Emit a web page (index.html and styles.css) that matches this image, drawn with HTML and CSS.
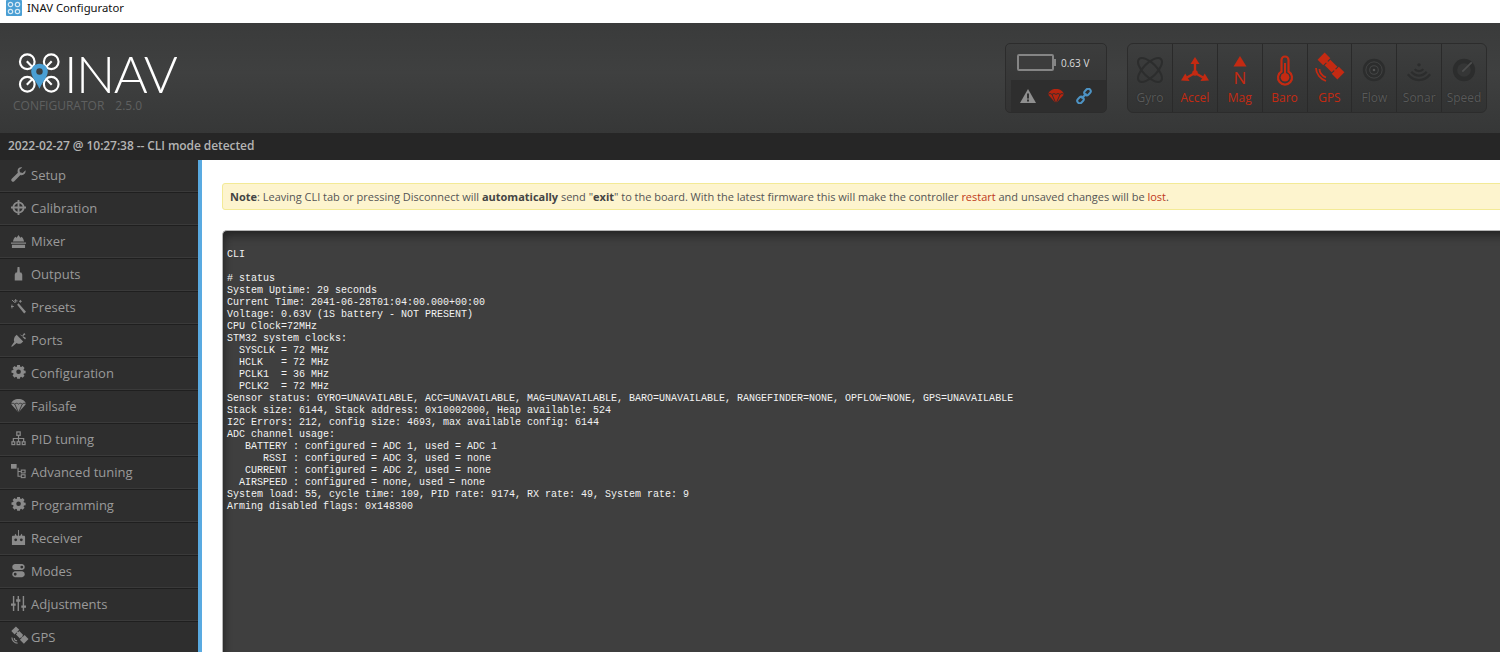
FILE: index.html
```html
<!DOCTYPE html>
<html lang="en">
<head>
<meta charset="utf-8">
<title>INAV Configurator</title>
<link rel="stylesheet" href="styles.css">
</head>
<body>
<svg width="0" height="0" class="defs">
<defs>
<g id="i-gear"><path fill="currentColor" fill-rule="evenodd" d="M6.200 0h3.600l.4 2.200 1.200.5 1.900-1.300 2.500 2.500-1.300 1.900.5 1.200 2.200.4v3.200l-2.200.4-.5 1.200 1.300 1.900-2.500 2.500-1.900-1.300-1.200.5-.4 2.200H6.200l-.4-2.200-1.200-.5-1.900 1.300L.2 13.600l1.300-1.900-.5-1.200-2.200-.4V7l2.200-.4.5-1.200L.2 3.900l2.500-2.500 1.900 1.300 1.200-.5zM8 5.800a3 3 0 1 0 0 6 3 3 0 0 0 0-6z" transform="translate(1.500 0) scale(.82)"/></g>
<g id="i-chute"><path fill="currentColor" d="M8 1C4 1 .8 3 0 6.500L8 15.500l8-9C15.200 3 12 1 8 1z"/><path fill="none" stroke="#2e2e2e" stroke-width=".9" d="M0 6.500c1.300-1.200 2.700-1.200 4 0 1.300-1.200 2.700-1.200 4 0 1.300-1.200 2.700-1.200 4 0 1.300-1.200 2.700-1.200 4 0M4 6.500L8 15.500 12 6.500"/></g>
<g id="i-sat"><g transform="rotate(-45 9.500 6.500)" fill="currentColor"><rect x="6" y="-3" width="7" height="5"/><rect x="7" y="3" width="5" height="6"/><rect x="6" y="10" width="7" height="6"/><rect x="9" y="1" width="1.200" height="10"/></g><path fill="none" stroke="currentColor" stroke-width="1.200" d="M1 9c0 3 2.500 6 6 6M3.500 9.500c0 1.500 1.200 3 3 3"/></g>
</defs>
</svg>
<div class="titlebar">
  <svg class="appicon" viewBox="0 0 16 16"><rect width="16" height="16" rx="1" fill="#4a9fd4"/><g fill="none" stroke="#d8eaf5" stroke-width="1.200"><circle cx="4.500" cy="4.500" r="2.200"/><circle cx="11.500" cy="4.500" r="2.200"/><circle cx="4.500" cy="11.500" r="2.200"/><circle cx="11.500" cy="11.500" r="2.200"/></g></svg>
  <span>INAV Configurator</span>
</div>
<header class="header">
  <div class="brand">
    <div class="logo">
      <svg class="drone" viewBox="0 0 44 42">
        <g fill="none" stroke="#fff" stroke-width="2.200">
          <circle cx="9.500" cy="9.500" r="7.500"/><circle cx="34" cy="9.500" r="7.500"/><circle cx="9.500" cy="32.500" r="7.500"/><circle cx="34" cy="32.500" r="7.500"/>
          <path d="M9 9l6 6M34.500 9l-6 6M9 33l6-6M34.500 33l-6-6"/>
        </g>
        <path fill="#4a9fd4" d="M22 11.500c-5 0-8.500 3.700-8.500 8 0 5 5 10 8.500 17.500 3.500-7.500 8.500-12.500 8.500-17.500 0-4.300-3.500-8-8.500-8z"/>
        <circle cx="22" cy="19.500" r="3.300" fill="#3c3d3d"/>
      </svg>
      <span class="wordmark">INAV</span>
    </div>
    <div class="subtitle"><span>CONFIGURATOR</span><span>2.5.0</span></div>
  </div>
  <div class="status-box">
    <div class="battery-row">
      <span class="battery"></span>
      <span class="volt">0.63 V</span>
    </div>
    <div class="flag-row">
      <svg class="flag" viewBox="0 0 16 16"><path fill="#8f8f8f" d="M8 1l8 14H0z"/><rect x="7" y="5.500" width="2" height="5" fill="#333"/><rect x="7" y="11.500" width="2" height="2" fill="#333"/></svg>
      <svg class="flag red" viewBox="0 0 16 16"><use href="#i-chute"/></svg>
      <svg class="flag" viewBox="0 0 16 16"><g fill="none" stroke="#4d93c4" stroke-width="2"><rect x="8" y="1.500" width="7" height="5" rx="2.500" transform="rotate(-45 11.500 4)"/><rect x="1" y="9.500" width="7" height="5" rx="2.500" transform="rotate(-45 4.500 12)"/><path d="M5.500 10.500l5-5"/></g></svg>
    </div>
  </div>
  <div class="sensors">
    <div class="sensor off"><svg viewBox="0 0 28 28"><g fill="none" stroke="currentColor" stroke-width="2.400"><ellipse cx="14" cy="14" rx="18" ry="8" transform="rotate(45 14 14)"/><ellipse cx="14" cy="14" rx="18" ry="8" transform="rotate(-45 14 14)"/></g></svg><span>Gyro</span></div>
    <div class="sensor on"><svg viewBox="0 0 28 28"><g fill="currentColor"><path d="M14 1l4.500 7h-9z"/><path d="M0 24.500l8.500.5-4.200-7.400z"/><path d="M28 24.500l-8.500.5 4.200-7.400z"/><circle cx="14" cy="17" r="2.800"/></g><path fill="none" stroke="currentColor" stroke-width="2.400" d="M14 7v10M14 17l-8 4.500M14 17l8 4.500"/></svg><span>Accel</span></div>
    <div class="sensor on"><svg viewBox="0 0 28 28"><path fill="currentColor" d="M14 0l6.500 10.500h-13z"/><text x="14" y="28" text-anchor="middle" class="n">N</text></svg><span>Mag</span></div>
    <div class="sensor on"><svg viewBox="0 0 28 28"><path fill="none" stroke="currentColor" stroke-width="2.200" d="M10.500 15.500V4a3.500 3.500 0 0 1 7 0v11.500a7 7 0 1 1-7 0z"/><circle cx="14" cy="21.300" r="4.300" fill="currentColor"/><rect x="13" y="7" width="2" height="12" fill="currentColor"/></svg><span>Baro</span></div>
    <div class="sensor on"><svg viewBox="0 0 28 28"><g transform="rotate(-45 16 10)" fill="currentColor"><rect x="11" y="-4" width="10" height="8"/><rect x="12" y="5" width="8" height="10"/><rect x="11" y="16" width="10" height="8"/><rect x="15" y="2" width="2" height="16"/></g><g fill="none" stroke="currentColor" stroke-width="1.800"><path d="M1 12c0 6 4.500 11 10 13"/><path d="M4.500 13c0 4 3 7 6.500 8.500"/></g></svg><span>GPS</span></div>
    <div class="sensor off"><svg viewBox="0 0 28 28"><circle cx="14" cy="14" r="13" fill="currentColor"/><g fill="none" stroke="#454646"><circle cx="14" cy="14" r="9.500" stroke-width="1"/><circle cx="14" cy="14" r="5" stroke-width="1.200"/></g><circle cx="14" cy="14" r="1.500" fill="#555"/></svg><span>Flow</span></div>
    <div class="sensor off"><svg viewBox="0 0 28 28"><circle cx="14" cy="8" r="2" fill="currentColor"/><g fill="none" stroke="currentColor" stroke-width="2.600"><path d="M9 13c2.500 3 7.500 3 10 0"/><path d="M5 16c5 6 13 6 18 0"/><path d="M1 19c7 9 19 9 26 0"/></g></svg><span>Sonar</span></div>
    <div class="sensor off"><svg viewBox="0 0 28 28"><circle cx="14" cy="14" r="13" fill="currentColor"/><circle cx="14" cy="14" r="8" fill="#353636"/><path stroke="#4d4e4e" stroke-width="2" d="M12 16L23 5"/></svg><span>Speed</span></div>
  </div>
</header>
<div class="logbar">2022-02-27 @ 10:27:38 -- CLI mode detected</div>
<div class="main">
  <nav class="nav">
    <a class="navitem"><svg viewBox="0 0 16 16"><path fill="currentColor" d="M15.500 3.500L12.500 6.500 9.500 5.500 9 3 12 .5C9.500-.3 6.800 1.500 7 4.500c0 .6.100 1 .3 1.500L.8 12.500c-.9 1-.6 2 .1 2.700.7.700 1.700.8 2.600-.1L10 8.600c3.200 1 6-1.800 5.500-5.100z"/></svg>Setup</a>
    <a class="navitem"><svg viewBox="0 0 16 16"><g fill="none" stroke="currentColor" stroke-width="2"><circle cx="8" cy="8" r="5.500"/><path d="M8 0v16M0 8h16"/></g></svg>Calibration</a>
    <a class="navitem"><svg viewBox="0 0 16 16"><path fill="currentColor" d="M3 6l1.500-2L6 5l2-3 2 3 1.500-1L13 6l1 3H2zM0 10h16v1.500H0zM1 12.500h14V16H1z"/></svg>Mixer</a>
    <a class="navitem"><svg viewBox="0 0 16 16"><path fill="currentColor" d="M7 1h2l.5 6H11l1 2v6.500H4V9l1-2h1.500z"/></svg>Outputs</a>
    <a class="navitem"><svg viewBox="0 0 16 16"><path fill="currentColor" d="M6.500 6l1.500-1.500L16 13.500 14 15.500z"/><path stroke="currentColor" d="M5 0v4M3 2h4M1 6v4M0 8h3M1 1l3 3M10 1v3M8.500 2.500h3"/></svg>Presets</a>
    <a class="navitem"><svg viewBox="0 0 16 16"><path fill="currentColor" d="M6 3l7 7-2 2c-1.800 1-3.500.8-5-.3L1.500 15.500 0 15.500l3.500-5C2.800 9 3 7 4 5zM9 2L11.500 4.500 14 1l1.500 1.500L12 5l3 3 1-1.500z"/></svg>Ports</a>
    <a class="navitem"><svg viewBox="0 0 16 16"><use href="#i-gear"/></svg>Configuration</a>
    <a class="navitem"><svg viewBox="0 0 16 16"><use href="#i-chute"/></svg>Failsafe</a>
    <a class="navitem"><svg viewBox="0 0 16 16"><g fill="none" stroke="currentColor" stroke-width="1.300"><rect x="6.200" y="1" width="3.600" height="3.600"/><rect x="1" y="11.500" width="3" height="3"/><rect x="6.500" y="11.500" width="3" height="3"/><rect x="12" y="11.500" width="3" height="3"/><path d="M8 4.500v7M2.500 11.500V8h11v3.500"/></g></svg>PID tuning</a>
    <a class="navitem"><svg viewBox="0 0 16 16"><rect x="0" y="0" width="6" height="5" fill="currentColor"/><g fill="none" stroke="currentColor" stroke-width="1.200"><path d="M7.500 4v9h3M7.500 8h3"/><rect x="11" y="6.500" width="4" height="3"/><rect x="11" y="11.500" width="4" height="3"/></g></svg>Advanced tuning</a>
    <a class="navitem"><svg viewBox="0 0 16 16"><use href="#i-gear"/></svg>Programming</a>
    <a class="navitem"><svg viewBox="0 0 16 16"><path fill="currentColor" d="M7.500 0h1v6h-1zM4 5l1-1 1 2H10l1-2 1 1v1h1.500c1 0 1.500.5 1.500 1.500V16H1V7.500C1 6.500 1.500 6 2.500 6H4z"/><circle cx="5" cy="10.500" r="1.500" fill="#2e2e2e"/><circle cx="11" cy="10.500" r="1.500" fill="#2e2e2e"/></svg>Receiver</a>
    <a class="navitem"><svg viewBox="0 0 16 16"><path fill="currentColor" fill-rule="evenodd" d="M4 1h8a3.300 3.300 0 0 1 0 6.500H4A3.300 3.300 0 0 1 4 1zm7.500 1.800a1.500 1.500 0 1 0 0 3 1.500 1.500 0 0 0 0-3zM4 8.800h8a3.300 3.300 0 0 1 0 6.500H4a3.300 3.300 0 0 1 0-6.500zm.5 1.700a1.500 1.500 0 1 0 0 3 1.500 1.500 0 0 0 0-3z"/></svg>Modes</a>
    <a class="navitem"><svg viewBox="0 0 16 16"><path fill="currentColor" d="M2 0h1.500v8H5v2.500H3.500V16H2v-5.500H0V8h2zM7 0h1.500v3.500H10V6H8.500v10H7V6H5.500V3.500H7zM12.500 0H14v10h2v2.500h-2V16h-1.500v-3.500H11V10h1.500z"/></svg>Adjustments</a>
    <a class="navitem"><svg viewBox="0 0 16 16"><use href="#i-sat"/></svg>GPS</a>
  </nav>
  <main class="content">
    <div class="note"><strong>Note</strong>: Leaving CLI tab or pressing Disconnect will <strong>automatically</strong> send "<strong>exit</strong>" to the board. With the latest firmware this will make the controller <span class="warn">restart</span> and unsaved changes will be <span class="warn">lost</span>.</div>
    <pre class="term">CLI

# status
System Uptime: 29 seconds
Current Time: 2041-06-28T01:04:00.000+00:00
Voltage: 0.63V (1S battery - NOT PRESENT)
CPU Clock=72MHz
STM32 system clocks:
  SYSCLK = 72 MHz
  HCLK   = 72 MHz
  PCLK1  = 36 MHz
  PCLK2  = 72 MHz
Sensor status: GYRO=UNAVAILABLE, ACC=UNAVAILABLE, MAG=UNAVAILABLE, BARO=UNAVAILABLE, RANGEFINDER=NONE, OPFLOW=NONE, GPS=UNAVAILABLE
Stack size: 6144, Stack address: 0x10002000, Heap available: 524
I2C Errors: 212, config size: 4693, max available config: 6144
ADC channel usage:
   BATTERY : configured = ADC 1, used = ADC 1
      RSSI : configured = ADC 3, used = none
   CURRENT : configured = ADC 2, used = none
  AIRSPEED : configured = none, used = none
System load: 55, cycle time: 109, PID rate: 9174, RX rate: 49, System rate: 9
Arming disabled flags: 0x148300</pre>
  </main>
</div>
</body>
</html>
```
FILE: styles.css
```css
html, body { margin: 0; height: 652px; overflow: hidden; }
body { font-family: "Open Sans", "Noto Sans", sans-serif; background: #fff; display: flex; flex-direction: column; }
.defs { position: absolute; }
.titlebar { height: 23px; flex: none; background: #fff; display: flex; align-items: center; gap: 5px; padding: 0 0 8px 6px; box-sizing: border-box; font: 11.300px "Noto Sans", "Open Sans", sans-serif; color: #111; }
.appicon { width: 16px; height: 16px; margin-top: 1px; }
.header { height: 110px; flex: none; background: linear-gradient(#3a3b3b, #3f4040 45%, #363737); display: flex; align-items: flex-start; padding-top: 20px; box-sizing: border-box; }
.brand { width: 1005px; padding-left: 13px; box-sizing: border-box; flex: none; }
.logo { display: flex; align-items: center; gap: 3px; padding-left: 5px; height: 44px; margin-top: 8px; }
.drone { width: 43px; height: 42px; flex: none; }
.wordmark { font: 300 52px/44px Lato, "Open Sans", sans-serif; color: #fff; letter-spacing: -1.500px; }
.subtitle { font-size: 12px; color: #5f6060; display: flex; gap: 11px; margin-top: 4px; line-height: 14px; }
.status-box { width: 102px; height: 70px; box-sizing: border-box; flex: none; border-radius: 5px; background: linear-gradient(#3c3d3d, #333); border: 1px solid #2c2c2c; overflow: hidden; }
.battery-row { height: 36px; display: flex; align-items: center; gap: 6px; padding-left: 11px; }
.battery { width: 37px; height: 17px; box-sizing: border-box; border: 2px solid #858585; border-radius: 2px; background: #3c3c3c; position: relative; }
.battery::after { content: ""; position: absolute; right: -4px; top: 3px; width: 2px; height: 7px; background: #858585; }
.volt { font-size: 10px; color: #ddd; margin: 1px 0 0 1px; }
.flag-row { height: 32px; margin-left: 5px; background: #2e2e2e; display: flex; align-items: center; gap: 12px; padding-left: 9px; }
.flag { width: 16px; height: 16px; }
.flag.red { color: #b5240f; }
.sensors { margin-left: 20px; width: 360px; height: 70px; box-sizing: border-box; flex: none; display: flex; background: linear-gradient(#3d3e3e, #323333); border: 1px solid #2c2c2c; border-radius: 6px; overflow: hidden; }
.sensor { flex: 1; display: flex; flex-direction: column; align-items: center; padding-top: 12px; box-sizing: border-box; border-left: 1px solid #2a2a2a; font-size: 12px; }
.sensor:first-child { border-left: 0; }
.sensor svg { width: 28px; height: 28px; margin-bottom: 6px; overflow: visible; }
.sensor span { line-height: 16px; }
.sensor.off { color: #2c2d2d; }
.sensor.off svg { width: 24px; height: 24px; margin: 2px 0 8px; }
.sensor.off span { color: #595a5a; text-shadow: 0 0 1px #222; }
.sensor.on { color: #c42a12; }
.n { font: 17px "Open Sans", sans-serif; fill: #c42a12; }
.logbar { height: 27px; flex: none; background: #262626; color: #b4b4b4; font-size: 12px; font-weight: 600; letter-spacing: -.08px; line-height: 25px; padding-left: 8px; }
.main { flex: 1; display: flex; min-height: 0; background: #fff; }
.nav { width: 198px; flex: none; background: #2e2e2e; border-right: 4px solid #59aae1; display: flex; flex-direction: column; }
.navitem { height: 33px; flex: none; box-sizing: border-box; border-bottom: 1px solid #1f1f1f; box-shadow: inset 0 -1px 0 #3a3a3a; display: flex; align-items: center; gap: 5px; padding: 0 0 3px 11px; font-size: 13px; color: #9a9a9a; }
.navitem svg { width: 15px; height: 15px; flex: none; color: #8a8a8a; overflow: visible; }
.content { flex: 1; min-width: 0; padding: 23px 0 0 20px; display: flex; flex-direction: column; gap: 20px; overflow: hidden; }
.note { height: 27px; flex: none; box-sizing: border-box; margin-right: -20px; white-space: nowrap; background: #fdf4ce; border: 1px solid #f3ea96; border-radius: 3px 0 0 3px; padding-left: 7px; font-size: 11px; letter-spacing: -.01px; line-height: 25px; color: #555; }
.note strong { font-weight: 700; color: #444; }
.warn { color: #c0391b; }
.term { margin: 0 -20px 0 0; flex: 1; background: #3f3f3f; border-top: 1px solid #b5b5b5; border-left: 1px solid #b5b5b5; box-shadow: inset 0 12px 10px -8px #222, inset 8px 0 8px -8px #222; border-radius: 5px 0 0 0; padding: 18px 0 0 4px; font: 10px/12px "Liberation Mono", "DejaVu Sans Mono", monospace; color: #f2f2f2; overflow: hidden; }
```
